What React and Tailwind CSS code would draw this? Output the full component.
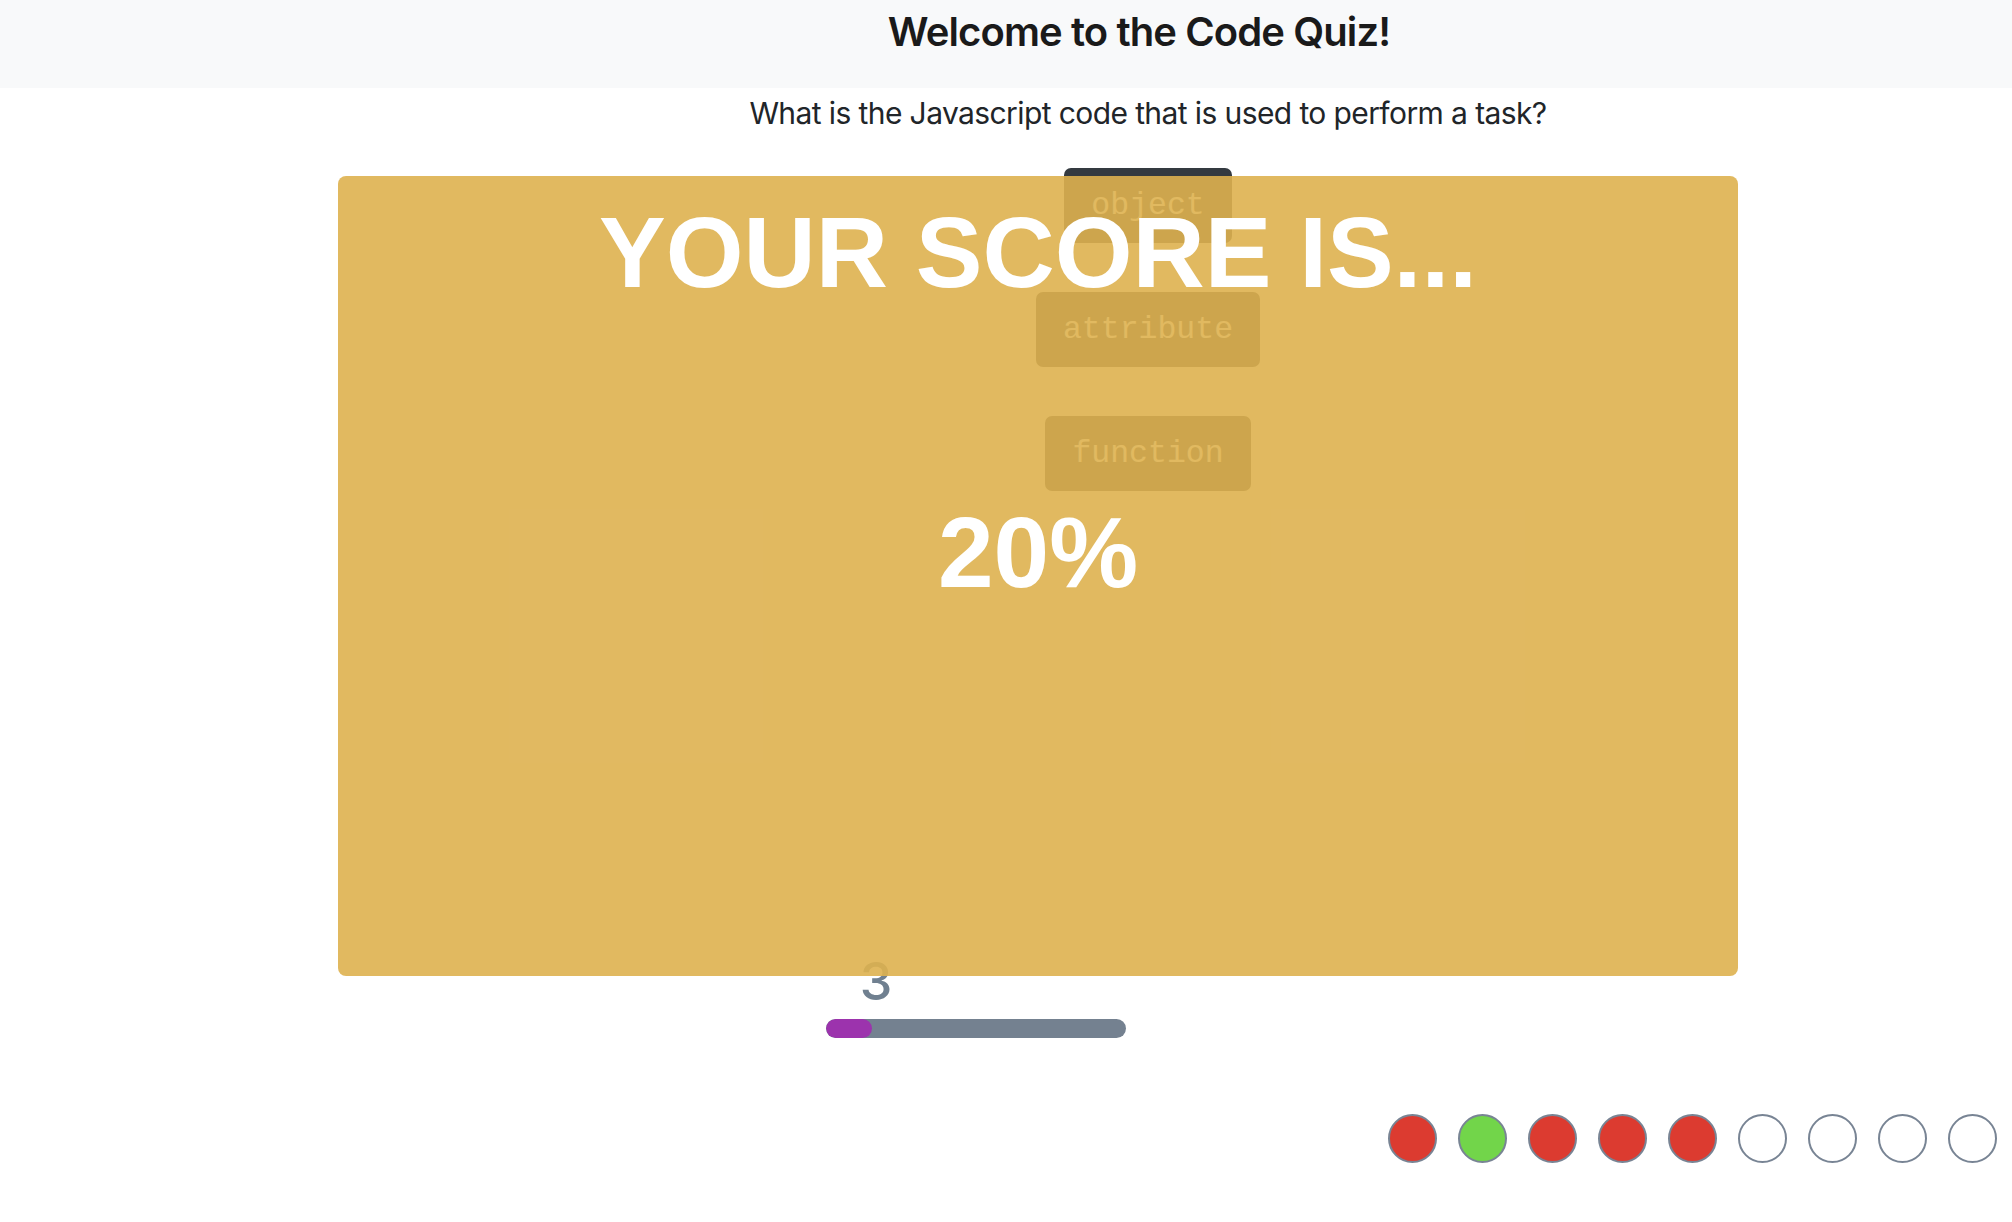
import React from "react";

export default function App() {
  const circles = ["red", "green", "red", "red", "red", "empty", "empty", "empty", "empty"];
  return (
    <div className="relative w-[2012px] h-[1222px] bg-white overflow-hidden" style={{ fontFamily: "Inter, 'Noto Sans', sans-serif" }}>
      <header className="h-[88px] bg-[#f8f9fa] flex justify-center pl-[266px] pt-[7px]">
        <h1 className="text-[40px] leading-[50px] font-semibold text-[#1a1a1a] tracking-[-0.9px]">Welcome to the Code Quiz!</h1>
      </header>
      <main className="flex flex-col items-center pl-[284px]">
        <h4 className="mt-[6px] text-[30px] leading-[38px] text-[#212529] tracking-[-0.6px]">What is the Javascript code that is used to perform a task?</h4>
        <div className="mt-[36px] flex flex-col items-center gap-[49px]" style={{ fontFamily: "'Liberation Mono', monospace" }}>
          <button className="bg-[#343a40] text-[#f8f9fa] text-[31.5px] leading-[47px] px-[27px] py-[14px] rounded-[7px]">object</button>
          <button className="bg-[#343a40] text-[#f8f9fa] text-[31.5px] leading-[47px] px-[27px] py-[14px] rounded-[7px]">attribute</button>
          <button className="bg-[#343a40] text-[#f8f9fa] text-[31.5px] leading-[47px] px-[27px] py-[14px] rounded-[7px]">function</button>
        </div>
      </main>
      <div className="mt-[463px] ml-[826px] flex flex-col w-[300px]">
        <div className="w-[100px] text-center text-[52px] leading-[56px] text-[#708090] font-medium">3</div>
        <div className="mt-[9px] h-[19px] w-[300px] rounded-full bg-[#748190] overflow-hidden">
          <div className="h-full w-[46px] rounded-full bg-[#9c33ad]" />
        </div>
      </div>
      <div className="mt-[76px] flex justify-end gap-[21px] pr-[15px]">
        {circles.map((c, i) => (
          <div
            key={i}
            className={
              c === "red"
                ? "w-[49px] h-[49px] rounded-full border-2 border-[#788494] bg-[#dc3b30]"
                : c === "green"
                ? "w-[49px] h-[49px] rounded-full border-2 border-[#788494] bg-[#72d54a]"
                : "w-[49px] h-[49px] rounded-full border-2 border-[#788494] bg-white"
            }
          />
        ))}
      </div>
      <div
        className="absolute left-[338px] top-[176px] w-[1400px] h-[800px] rounded-lg bg-[#deb14f]/90 flex flex-col items-center text-white font-bold text-[100px] leading-none pt-[26px]"
        style={{ fontFamily: "'Liberation Sans', Arial, sans-serif" }}
      >
        <div>YOUR SCORE IS...</div>
        <div className="mt-[200px]">20%</div>
      </div>
    </div>
  );
}
